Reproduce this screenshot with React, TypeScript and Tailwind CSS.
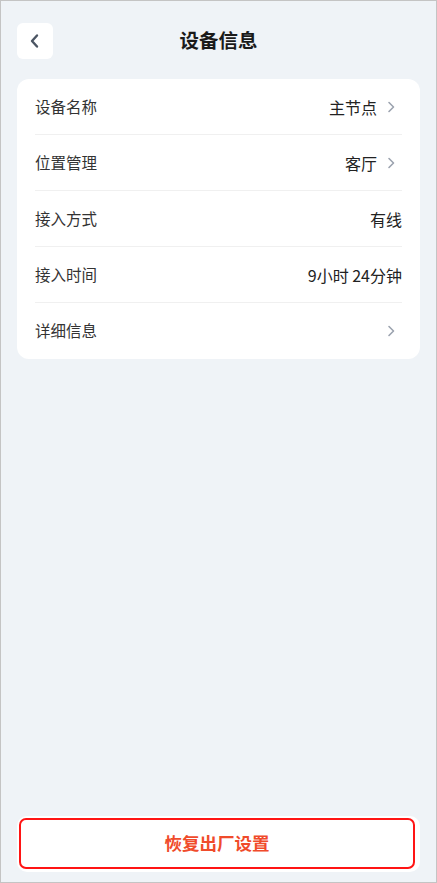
import React from "react";

const font = { fontFamily: '"Noto Sans CJK SC", "Noto Sans", sans-serif' };

function Chevron() {
  return (
    <svg width="10" height="14" viewBox="0 0 10 14" fill="none" className="ml-[9px] mr-[6px]">
      <path d="M3 2.5L7.5 7L3 11.5" stroke="#9ca3af" strokeWidth="1.6" strokeLinecap="round" strokeLinejoin="round" />
    </svg>
  );
}

const rows: { label: string; value?: string; arrow: boolean }[] = [
  { label: "设备名称", value: "主节点", arrow: true },
  { label: "位置管理", value: "客厅", arrow: true },
  { label: "接入方式", value: "有线", arrow: false },
  { label: "接入时间", value: "9小时 24分钟", arrow: false },
  { label: "详细信息", arrow: true },
];

export default function App() {
  return (
    <div
      className="w-[437px] h-[883px] bg-[#eff3f7] border border-[#c4c4c4] flex flex-col"
      style={font}
    >
      <div className="relative flex items-center justify-center h-[36px] mt-[22px] mx-[16px]">
        <div className="absolute left-0 top-0 w-[36px] h-[36px] rounded-[6px] bg-white flex items-center justify-center">
          <svg width="14" height="16" viewBox="0 0 14 16" fill="none">
            <path d="M9 2.5L4 8L9 13.5" stroke="#4b5563" strokeWidth="2.4" strokeLinecap="round" strokeLinejoin="round" />
          </svg>
        </div>
        <div className="text-[19.5px] leading-none font-bold text-[#1a1a1a] -mt-[2px]">设备信息</div>
      </div>

      <div className="mt-[20px] mx-[16px] bg-white rounded-[12px] px-[18px]">
        {rows.map((r, i) => (
          <div
            key={r.label}
            className={`flex items-center justify-between h-[56px] ${i < rows.length - 1 ? "border-b border-[#f0f0f0]" : ""}`}
          >
            <span className="text-[15.5px] text-[#333333]">{r.label}</span>
            <div className="flex items-center">
              {r.value && <span className="text-[16px] text-[#222222]">{r.value}</span>}
              {r.arrow && <Chevron />}
            </div>
          </div>
        ))}
      </div>

      <div className="flex-1" />

      <div className="mx-[16px] mb-[10px] bg-white rounded-[10px] pl-[2px] pr-[5px] pt-[2px] pb-[3px]">
        <div className="h-[51px] rounded-[7px] border-2 border-[#ff1414] flex items-center justify-center">
          <span className="text-[17.5px] font-semibold text-[#f04b2b]">恢复出厂设置</span>
        </div>
      </div>
    </div>
  );
}
